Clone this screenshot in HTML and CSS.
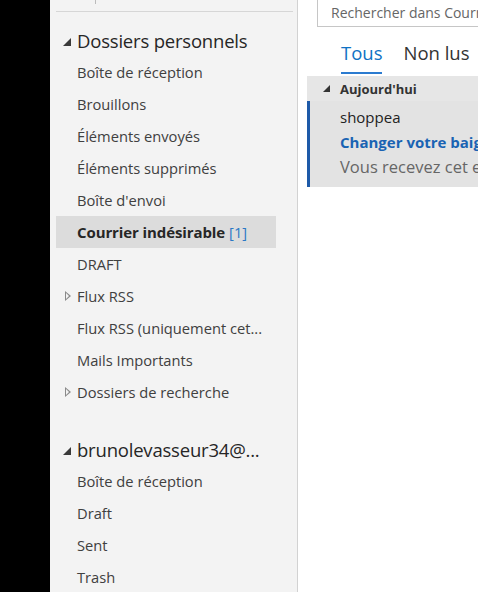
FILE: index.html
```html
<!DOCTYPE html>
<html lang="fr">
<head>
<meta charset="utf-8">
<link rel="stylesheet" href="styles.css">
</head>
<body>
<div class="rail"></div>
<nav class="folders">
  <div class="folders-top"><span class="tick"></span></div>
  <section class="group">
    <div class="group-head"><span class="tri-open"></span>Dossiers personnels</div>
    <ul class="list">
      <li class="item">Boîte de réception</li>
      <li class="item">Brouillons</li>
      <li class="item">Éléments envoyés</li>
      <li class="item">Éléments supprimés</li>
      <li class="item">Boîte d'envoi</li>
      <li class="item selected"><b>Courrier indésirable</b> <span class="count">[1]</span></li>
      <li class="item">DRAFT</li>
      <li class="item"><span class="tri-closed"></span>Flux RSS</li>
      <li class="item">Flux RSS (uniquement cet...</li>
      <li class="item">Mails Importants</li>
      <li class="item"><span class="tri-closed"></span>Dossiers de recherche</li>
    </ul>
  </section>
  <section class="group second">
    <div class="group-head"><span class="tri-open"></span>brunolevasseur34@...</div>
    <ul class="list">
      <li class="item">Boîte de réception</li>
      <li class="item">Draft</li>
      <li class="item">Sent</li>
      <li class="item">Trash</li>
    </ul>
  </section>
</nav>
<main class="main">
  <div class="search">Rechercher dans Courrier indésirable</div>
  <div class="tabs">
    <span class="tab active">Tous</span>
    <span class="tab">Non lus</span>
  </div>
  <div class="day-head"><span class="tri-small"></span>Aujourd'hui</div>
  <div class="msg">
    <div class="from">shoppea</div>
    <div class="subject">Changer votre baignoire en douche</div>
    <div class="preview">Vous recevez cet e-mail car</div>
  </div>
</main>
</body>
</html>
```
FILE: styles.css
```css
* { box-sizing: border-box; }
html, body { margin: 0; padding: 0; }
body {
  display: flex;
  width: 478px;
  height: 592px;
  overflow: hidden;
  font-family: "Open Sans", "Noto Sans", sans-serif;
  background: #ffffff;
}
.rail { width: 50px; flex: none; background: #000; }
.folders {
  width: 248px;
  flex: none;
  background: #f3f3f3;
  border-right: 1px solid #d2d2d2;
}
.folders-top {
  height: 12px;
  margin: 0 4px 0 6px;
  border-bottom: 1px solid #d6d6d6;
  position: relative;
}
.tick {
  position: absolute;
  left: 39px; top: 0;
  width: 1px; height: 4px;
  background: #bbb;
}
.group { margin-top: 12px; }
.group.second { margin-top: 25px; }
.group-head {
  height: 32px;
  display: flex;
  align-items: center;
  padding-left: 13px;
  font-size: 18.5px;
  letter-spacing: -0.2px;
  color: #262626;
  white-space: nowrap;
}
.tri-open {
  width: 0; height: 0;
  border-style: solid;
  border-width: 0 0 8px 8px;
  border-color: transparent transparent #3a3a3a transparent;
  margin-right: 6px;
  margin-top: 3px;
}
.list { list-style: none; margin: 0; padding: 0; }
.item {
  height: 32px;
  width: 220px;
  margin-left: 6px;
  padding-left: 21px;
  display: flex;
  align-items: center;
  font-size: 14.7px;
  color: #404040;
  white-space: nowrap;
  position: relative;
}
.item.selected { background: #dcdcdc; color: #262626; }
.item b { font-weight: 700; font-size: 15px; letter-spacing: -0.1px; }
.count { color: #2b78c5; margin-left: 4px; }
.tri-closed {
  position: absolute;
  left: 9px; top: 11px;
  width: 6px; height: 10px;
}
.tri-closed::before {
  content: "";
  position: absolute; left: 0; top: 0;
  border-style: solid;
  border-width: 5px 0 5px 6px;
  border-color: transparent transparent transparent #8a8a8a;
}
.tri-closed::after {
  content: "";
  position: absolute; left: 1px; top: 2px;
  border-style: solid;
  border-width: 3px 0 3px 3.5px;
  border-color: transparent transparent transparent #f3f3f3;
}
.main { flex: 1; min-width: 0; overflow: hidden; }
.search {
  margin-left: 19px;
  margin-top: -2px;
  height: 29px;
  width: 200px;
  border: 1px solid #c6c6c6;
  border-right: none;
  padding-left: 13px;
  font-size: 14px;
  line-height: 27px;
  color: #666;
  white-space: nowrap;
  overflow: hidden;
}
.tabs {
  display: flex;
  gap: 21px;
  margin-left: 43px;
  margin-top: 11px;
  height: 36px;
}
.tab {
  font-size: 18.5px;
  color: #333;
  line-height: 30px;
  white-space: nowrap;
}
.tab.active {
  color: #0f72c4;
  border-bottom: 2px solid #2b7bd0;
  height: 36px;
}
.day-head {
  margin-left: 9px;
  margin-top: 2px;
  height: 25px;
  background: #e6e6e6;
  display: flex;
  align-items: center;
  padding-left: 16px;
  font-size: 13px;
  font-weight: 700;
  color: #333;
  white-space: nowrap;
}
.tri-small {
  width: 0; height: 0;
  border-style: solid;
  border-width: 0 0 7px 7px;
  border-color: transparent transparent #333 transparent;
  margin-right: 10px;
}
.msg {
  margin-left: 9px;
  height: 86px;
  background: #e3e3e3;
  border-left: 3px solid #1e5aa8;
  padding-left: 30px;
  padding-top: 4px;
  white-space: nowrap;
  overflow: hidden;
}
.from { font-size: 15px; color: #222; line-height: 24px; }
.subject { font-size: 15px; font-weight: 700; color: #1a63b3; line-height: 26px; }
.preview { font-size: 16.5px; color: #666; line-height: 24px; }
```
